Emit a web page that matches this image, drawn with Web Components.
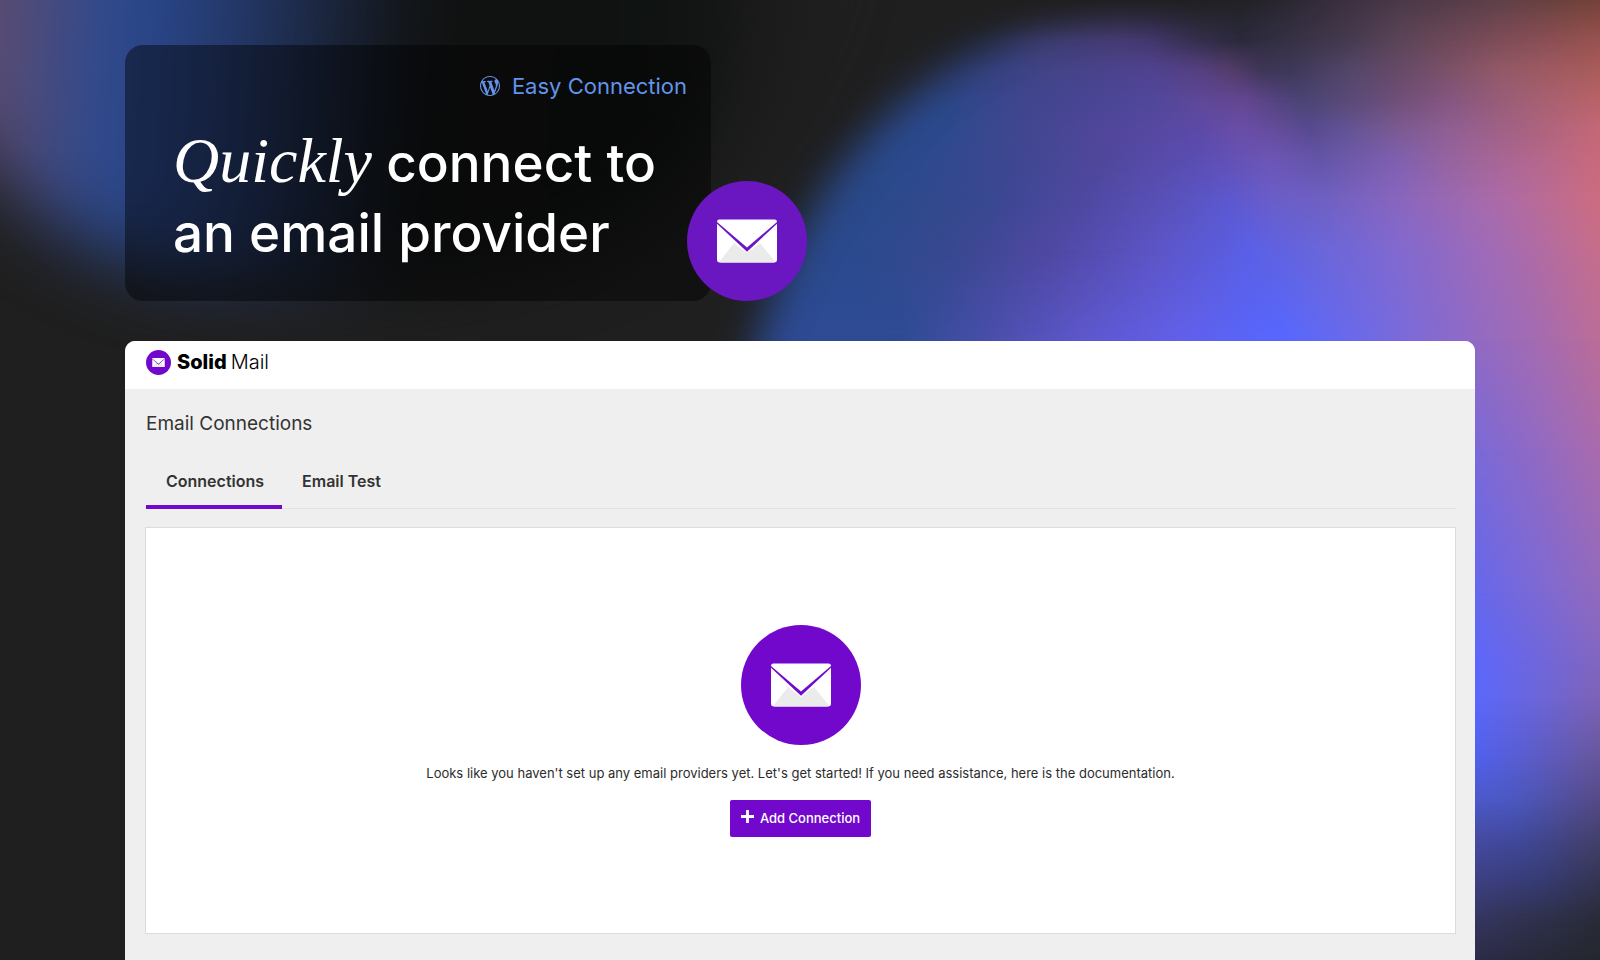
<!DOCTYPE html>
<html lang="en">
<head>
<meta charset="utf-8">
<title>Solid Mail – Easy Connection</title>
<style>
  html, body { margin: 0; min-height: 100vh; }
  body { background: #1f1f1f; font-family: Inter, "Liberation Sans", sans-serif; color: #333; }
</style>
</head>
<body>
<promo-page>
  <aurora-backdrop slot="backdrop"></aurora-backdrop>
  <hero-card>
    <span slot="tag">Easy Connection</span>
    <em slot="accent">Quickly</em>
    <span slot="title">connect to<br>an email provider</span>
  </hero-card>
  <app-window>
    <brand-bar slot="header"></brand-bar>
    <span slot="title">Email Connections</span>
    <tab-bar slot="tabs" labels="Connections,Email Test"></tab-bar>
    <empty-state>
      <span>Looks like you haven't set up any email providers yet. Let's get started! If you need assistance, here is the documentation.</span>
      <span slot="action">Add Connection</span>
    </empty-state>
  </app-window>
</promo-page>

<script>
const define = (name, html, setup) => {
  const template = document.createElement('template');
  template.innerHTML = html;
  customElements.define(name, class extends HTMLElement {
    constructor() {
      super();
      this.attachShadow({ mode: 'open' }).append(template.content.cloneNode(true));
    }
    connectedCallback() { if (setup) setup(this, this.shadowRoot); }
  });
};

define('promo-page', `
<style>
  :host { display: flex; position: relative; isolation: isolate; min-height: 100vh; box-sizing: border-box; padding: 45px 24px 0; }
  main { display: flex; flex-direction: column; gap: 40px; width: 100%; max-width: 1350px; margin: 0 auto; }
  ::slotted([slot=backdrop]) { position: absolute; inset: 0; z-index: -1; }
  ::slotted(app-window) { flex: 1; }
</style>
<slot name="backdrop"></slot>
<main><slot></slot></main>`);

/* Colour field: each row is [y, x, colour, x, colour, ...] on a 1600 x 960 grid,
   faded into the row above it. Soft SVG shapes then shade the left half. */
const FIELD = [
  [0, 980, '#202022', 1100, '#232329', 1240, '#24242b', 1300, '#302a38', 1400, '#4a3848', 1500, '#5f4048', 1600, '#744238'],
  [40, 980, '#2b3a6b', 1040, '#3d3e74', 1120, '#463c74', 1150, '#44386f', 1200, '#362f4c', 1240, '#2b2a3c', 1290, '#363144', 1350, '#463a4f', 1400, '#5c4558', 1500, '#7e4c58', 1600, '#98524f'],
  [70, 950, '#2e4280', 1050, '#434488', 1150, '#504290', 1200, '#554080', 1230, '#533d6c', 1260, '#403658', 1290, '#3d3858', 1350, '#54466a', 1400, '#674a68', 1500, '#925968', 1600, '#aa5c5a'],
  [100, 945, '#2c488a', 1030, '#41458e', 1150, '#50479a', 1200, '#5f4898', 1245, '#644690', 1275, '#544380', 1300, '#4a4475', 1350, '#5a4a77', 1400, '#704f79', 1450, '#855680', 1530, '#a36074', 1600, '#b96368'],
  [130, 940, '#2b4a8e', 1020, '#414790', 1100, '#50469a', 1200, '#5c4aa8', 1240, '#6a4ea8', 1280, '#644c9a', 1310, '#584a90', 1350, '#645496', 1400, '#7c5b92', 1450, '#905f93', 1530, '#a9637f', 1600, '#c46877'],
  [160, 910, '#2b4a8d', 1000, '#3c4790', 1100, '#50479b', 1200, '#5b4eb4', 1270, '#6d56b6', 1320, '#6455a8', 1400, '#8060b0', 1450, '#96649f', 1530, '#b2678f', 1600, '#c96a7b'],
  [200, 880, '#2b4a8c', 980, '#37488f', 1080, '#4e48a0', 1150, '#584fb4', 1230, '#5c58d0', 1270, '#6a5dca', 1330, '#7061c2', 1400, '#8966be', 1500, '#ac6ba8', 1600, '#cc6c80'],
  [250, 860, '#2b4a8e', 950, '#38488f', 1050, '#5048a2', 1150, '#5c54c4', 1250, '#5a60e6', 1320, '#6a66da', 1400, '#8269cf', 1500, '#a36bb4', 1600, '#c66d8a'],
  [340, 900, '#2e4b94', 1000, '#4c4fae', 1080, '#5d57cc', 1180, '#6260ea', 1280, '#5567ff', 1360, '#6c6ae8', 1450, '#8a6acb', 1530, '#a16bb4', 1600, '#bb6d98'],
  [450, 1475, '#7a69d8', 1600, '#a96bad'],
  [590, 1475, '#6668ec', 1600, '#926abd'],
  [660, 1475, '#5c67fa', 1600, '#8266c0'],
  [700, 1475, '#5a68fb', 1600, '#7c62b6'],
  [760, 1475, '#5060ec', 1600, '#66569a'],
  [800, 1475, '#4c59c8', 1510, '#4b58c2', 1600, '#554a86'],
  [840, 1475, '#454ba2', 1520, '#40489a', 1600, '#43406a'],
  [880, 1475, '#3d4084', 1540, '#363c74', 1600, '#353452'],
  [920, 1475, '#35365f', 1600, '#292b38'],
  [960, 1475, '#2c2b48', 1600, '#23272c'],
];
define('aurora-backdrop', `
<style>
  :host { display: block; overflow: hidden; background: #1f1f1f; }
  .row, svg { position: absolute; inset: 0; width: 100%; height: 100%; }
</style>
<div id="field" aria-hidden="true"></div>
<svg viewBox="0 0 1600 960" preserveAspectRatio="none" aria-hidden="true">
  <defs>
    <filter id="edge" color-interpolation-filters="sRGB" filterUnits="userSpaceOnUse" x="-300" y="-300" width="2200" height="1600"><feGaussianBlur stdDeviation="20"/></filter>
    <filter id="haze" color-interpolation-filters="sRGB" filterUnits="userSpaceOnUse" x="-400" y="-400" width="2200" height="1600"><feGaussianBlur stdDeviation="36"/></filter>
    <linearGradient id="dusk" gradientUnits="userSpaceOnUse" x1="0" y1="0" x2="800" y2="50">
      <stop offset="0" stop-color="#5c4c70"/><stop offset=".07" stop-color="#434a80"/>
      <stop offset=".145" stop-color="#2a4a92"/><stop offset=".25" stop-color="#273f78"/>
      <stop offset=".36" stop-color="#1e2d50"/><stop offset=".44" stop-color="#182030"/>
      <stop offset=".53" stop-color="#101111"/><stop offset=".86" stop-color="#0f1311"/>
      <stop offset=".92" stop-color="#181918"/><stop offset="1" stop-color="#1f1f1f"/>
    </linearGradient>
  </defs>
  <path filter="url(#edge)" fill="#1f1f1f" d="M-200-200H1300V-20L1190 8Q1100-9 1010 30Q903 84 834 176Q776 262 750 370V1200H-200Z"/>
  <path filter="url(#haze)" fill="url(#dusk)" d="M-200-200H860L800 20Q700 230 520 264Q300 310 130 262Q50 230 0 180L-200-40Z"/>
</svg>`, (host, root) => {
  let above = 0;
  for (const [y, ...stops] of FIELD) {
    const colours = [];
    for (let i = 0; i < stops.length; i += 2) colours.push(`${stops[i + 1]} ${stops[i] / 16}%`);
    const row = document.createElement('div');
    row.className = 'row';
    row.style.background = `linear-gradient(to right, ${colours})`;
    if (y) row.style.maskImage = `linear-gradient(to bottom, transparent ${above / 9.6}%, #000 ${y / 9.6}%)`;
    root.getElementById('field').append(row);
    above = y;
  }
});

define('mail-badge', `
<style>
  :host { display: block; width: var(--size, 120px); height: var(--size, 120px); }
  svg { display: block; width: 100%; height: 100%; }
</style>
<svg viewBox="0 0 120 120" aria-hidden="true">
  <circle cx="60" cy="60" r="60" fill="var(--disc, #7108cb)"/>
  <rect x="30" y="38.5" width="60" height="43" rx="2.4" fill="#fff"/>
  <path d="M47 62L32.500 80.500Q33 81.500 34 81.500H86Q87.500 81.500 88 80.500L73 62L60 72Z" fill="#ebebeb"/>
  <path d="M30 41L60 66.500L90 41V42.700L60 70.800L30 42.700Z" fill="var(--disc, #7108cb)"/>
</svg>`);

define('hero-card', `
<style>
  :host { display: block; position: relative; width: 586px; max-width: 100%; height: 256px; box-sizing: border-box; padding: 29px 24px 30px 48px; border-radius: 18px; background: rgba(0, 0, 0, .43); }
  .tag { display: flex; justify-content: flex-end; align-items: center; gap: 12px; height: 24px; color: #6393ea; font-size: 22px; line-height: 24px; }
  .tag svg { width: 20px; height: 20px; }
  h1 { margin: 30px 0 0; color: #fff; font-weight: 500; font-size: 53px; line-height: 70px; white-space: nowrap; }
  ::slotted(em) { font: italic 400 64px/64px "Liberation Serif", serif; }
  mail-badge { --disc: #6a17c2; position: absolute; right: -96px; bottom: 0; }
</style>
<div class="tag">
  <svg viewBox="0 0 20 20" fill="currentColor" aria-hidden="true"><path d="M20 10c0-5.510-4.490-10-10-10C4.480 0 0 4.490 0 10c0 5.520 4.480 10 10 10 5.510 0 10-4.480 10-10zM7.780 15.370L4.370 6.220c.55-.02 1.170-.08 1.170-.08.5-.06.44-1.130-.06-1.110 0 0-1.450.11-2.370.11-.18 0-.37 0-.58-.01C4.120 2.690 6.870 1.110 10 1.110c2.330 0 4.450.87 6.050 2.340-.68-.11-1.650.39-1.650 1.580 0 .74.45 1.360.9 2.100.35.61.55 1.360.55 2.460 0 1.490-1.400 5-1.400 5l-3.030-8.370c.54-.02.82-.17.82-.17.5-.05.44-1.250-.06-1.220 0 0-1.440.12-2.380.12-.87 0-2.330-.12-2.330-.12-.5-.03-.56 1.200-.06 1.220l.92.08 1.260 3.410zM17.410 10c.24-.64.74-1.870.43-4.250.7 1.290 1.050 2.710 1.050 4.250 0 3.290-1.730 6.240-4.400 7.780.97-2.590 1.940-5.200 2.920-7.780zM6.100 18.090C3.120 16.650 1.110 13.530 1.110 10c0-1.300.23-2.480.72-3.590C3.250 10.300 4.670 14.200 6.100 18.090zm4.030-6.630l2.580 6.980c-.86.29-1.760.45-2.710.45-.79 0-1.570-.11-2.290-.33.81-2.380 1.620-4.740 2.420-7.100z"/></svg>
  <slot name="tag"></slot>
</div>
<h1><slot name="accent"></slot> <slot name="title"></slot></h1>
<mail-badge></mail-badge>`);

define('app-window', `
<style>
  :host { display: flex; flex-direction: column; border-radius: 10px 10px 0 0; overflow: hidden; background: #efefef; }
  section { flex: 1; display: flex; flex-direction: column; padding: 20px 19px 26px 20px; }
  h2 { margin: 0 0 20px 1px; font-weight: 400; font-size: 19px; line-height: 30px; color: #333; }
  .body { flex: 1; display: flex; margin-top: 18px; }
  ::slotted(empty-state) { flex: 1; }
</style>
<slot name="header"></slot>
<section>
  <h2><slot name="title"></slot></h2>
  <slot name="tabs"></slot>
  <div class="body"><slot></slot></div>
</section>`);

define('brand-bar', `
<style>
  :host { display: flex; align-items: center; gap: 6px; height: 48px; box-sizing: border-box; padding: 0 21px 6px; background: #fff; color: #000; }
  mail-badge { --size: 25px; }
  .name { display: flex; gap: 4px; font-size: 20px; line-height: 24px; }
  b { font-weight: 800; }
  .light { font-weight: 300; }
</style>
<mail-badge></mail-badge>
<div class="name"><b>Solid</b><span class="light">Mail</span></div>`);

define('tab-bar', `
<style>
  :host { display: block; margin-left: 1px; border-bottom: 1px solid #e2e2e2; }
  div { display: flex; margin-bottom: -1px; }
  button { height: 50px; padding: 0 18px 2px 20px; border: 0; border-bottom: 4px solid transparent; background: none; font: 600 16px/24px Inter, sans-serif; color: #333; cursor: pointer; }
  button[aria-selected=true] { border-color: #7108cb; }
</style>
<div role="tablist"></div>`, (host, root) => {
  const list = root.querySelector('div');
  const select = tab => [...list.children].forEach(t => t.setAttribute('aria-selected', t === tab));
  list.replaceChildren(...host.getAttribute('labels').split(',').map(label => {
    const tab = document.createElement('button');
    tab.type = 'button';
    tab.setAttribute('role', 'tab');
    tab.textContent = label;
    tab.addEventListener('click', () => select(tab));
    return tab;
  }));
  select(list.firstElementChild);
});

define('empty-state', `
<style>
  :host { display: flex; flex-direction: column; align-items: center; justify-content: center; box-sizing: border-box; border: 1px solid #dcdcdc; background: #fff; padding: 20px; }
  p { margin: 18px 0 17px; font-size: 13px; line-height: 20px; color: #2c2c2c; text-align: center; }
  button { display: flex; align-items: center; gap: 6px; height: 37px; padding: 0 11px; border: 0; border-radius: 2px; background: #7108cb; color: #fff; font: 500 13px/20px Inter, sans-serif; cursor: pointer; }
  svg { width: 13px; height: 13px; margin-bottom: 3px; }
</style>
<mail-badge></mail-badge>
<p><slot></slot></p>
<button type="button"><svg viewBox="0 0 13 13" aria-hidden="true"><path d="M6.500 0V13M0 6.500H13" stroke="#fff" stroke-width="2.800"/></svg><slot name="action"></slot></button>`);
</script>
</body>
</html>
